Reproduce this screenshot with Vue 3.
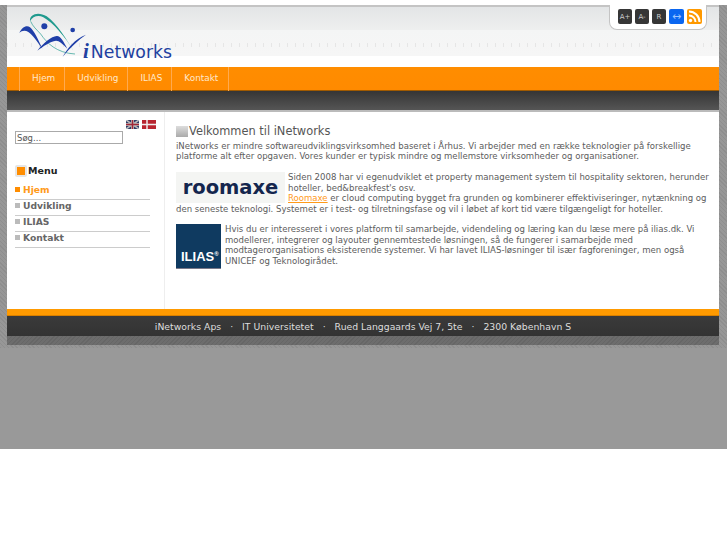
<template>
  <div class="page">
    <div class="shell">
      <header class="top">
        <div class="logo">
          <svg width="100" height="58" viewBox="0 0 300 174" class="logo-mark">
            <path d="M60 40C58 18 85 10 110 25C140 45 170 95 193 133C165 85 130 45 100 28C85 20 68 25 60 40Z" fill="#1f9a8e" />
            <path d="M62 40C68 55 80 65 92 78C110 105 140 135 195 138" fill="none" stroke="#1f9a8e" stroke-width="2" />
            <path d="M28 75C35 58 50 50 60 58C72 68 85 95 97 122C80 100 68 80 55 72C45 66 35 68 28 75Z" fill="#1f3fa8" />
            <path d="M82 128C100 105 125 85 140 84C152 83 160 100 172 122C158 108 148 98 138 98C120 100 100 115 82 128Z" fill="#1f3fa8" />
            <path d="M158 146C172 122 195 92 228 80C205 95 182 118 158 146Z" fill="#1f3fa8" />
            <circle cx="103" cy="55" r="9" fill="#1f3fa8" />
            <circle cx="188" cy="66" r="7" fill="#1f3fa8" />
          </svg>
          <span class="logo-text"><i>i</i>Networks</span>
        </div>
        <div class="tools">
          <span class="tool">A+</span>
          <span class="tool">A-</span>
          <span class="tool">R</span>
          <span class="tool blue">↔</span>
          <span class="tool rss">
            <svg width="13" height="13" viewBox="0 0 13 13">
              <circle cx="2.5" cy="10.5" r="1.7" fill="#fff" />
              <path d="M1 5.5a6.5 6.5 0 0 1 6.5 6.5M1 1.5a10.5 10.5 0 0 1 10.5 10.5" fill="none" stroke="#fff" stroke-width="2" />
            </svg>
          </span>
        </div>
      </header>

      <nav class="nav">
        <a v-for="item in navItems" :key="item" class="nav-item">{{ item }}</a>
      </nav>
      <div class="darkbar"></div>

      <div class="main">
        <aside class="side">
          <div class="flags">
            <svg width="13" height="9" viewBox="0 0 13 9" class="flag">
              <rect width="13" height="9" fill="#2b3a66" />
              <path d="M0 0L13 9M13 0L0 9" stroke="#bbb" stroke-width="1.6" />
              <path d="M6.5 0V9M0 4.5H13" stroke="#bbb" stroke-width="3" />
              <path d="M6.5 0V9M0 4.5H13" stroke="#a02838" stroke-width="1.5" />
            </svg>
            <svg width="14" height="9" viewBox="0 0 14 9" class="flag">
              <rect width="14" height="9" fill="#b8242f" />
              <path d="M5 0V9M0 4.5H14" stroke="#eee" stroke-width="1.5" />
            </svg>
          </div>
          <input class="search" type="text" value="Søg..." />
          <h3 class="menu-title"><span class="menu-icon"><span></span></span>Menu</h3>
          <ul class="menu">
            <li v-for="(item, i) in menuItems" :key="item" :class="{ active: i === 0 }">
              <span class="bullet"></span>{{ item }}
            </li>
          </ul>
        </aside>

        <section class="content">
          <h2 class="title"><span class="title-icon"></span>Velkommen til iNetworks</h2>
          <p>iNetworks er mindre softwareudviklingsvirksomhed baseret i Århus. Vi arbejder med en række teknologier på forskellige platforme alt efter opgaven. Vores kunder er typisk mindre og mellemstore virksomheder og organisationer.</p>
          <p>
            <span class="roomaxe">roomaxe</span>
            Siden 2008 har vi egenudviklet et property management system til hospitality sektoren, herunder hoteller, bed&amp;breakfest's osv.<br />
            <a class="link">Roomaxe</a> er cloud computing bygget fra grunden og kombinerer effektiviseringer, nytænkning og den seneste teknologi. Systemet er i test- og tilretningsfase og vil i løbet af kort tid være tilgængeligt for hoteller.
          </p>
          <p>
            <span class="ilias">ILIAS<sup>®</sup></span>
            Hvis du er interesseret i vores platform til samarbejde, videndeling og læring kan du læse mere på ilias.dk. Vi modellerer, integrerer og layouter gennemtestede løsningen, så de fungerer i samarbejde med modtagerorganisations eksisterende systemer. Vi har lavet ILIAS-løsninger til især fagforeninger, men også UNICEF og Teknologirådet.
          </p>
        </section>
      </div>

      <div class="orange"></div>
      <footer class="foot">
        <span>iNetworks Aps</span><span class="dot">·</span>
        <span>IT Universitetet</span><span class="dot">·</span>
        <span>Rued Langgaards Vej 7, 5te</span><span class="dot">·</span>
        <span>2300 København S</span>
      </footer>
      <div class="hatch"></div>
    </div>
  </div>
</template>

<script setup>
const navItems = ['Hjem', 'Udvikling', 'ILIAS', 'Kontakt']
const menuItems = ['Hjem', 'Udvikling', 'ILIAS', 'Kontakt']
</script>

<style>
html, body {
  background: #fff;
}
</style>

<style scoped>
.page {
  height: 444px;
  margin-top: 5px;
  padding: 0 8px 0 7px;
  background: #999;
  font-family: "DejaVu Sans", sans-serif;
  overflow: hidden;
  position: relative;
}

.page::before {
  content: "";
  position: absolute;
  left: 0;
  right: 0;
  top: 0;
  height: 343px;
  background: repeating-linear-gradient(45deg, #8e8e8e 0 1px, #979797 1px 3px);
}

.shell {
  position: relative;
}

/* header */
.top {
  height: 62px;
  border-top: 2px solid #c4c4c4;
  box-sizing: border-box;
  background:
    repeating-linear-gradient(90deg, #e6e6e6 0 1px, transparent 1px 8px) 0 36px / 100% 4px no-repeat,
    linear-gradient(#e3e5e6, #eeefef 23px, #f4f5f5 23px, #f6f6f6 49px, #fff 49px);
  position: relative;
}

.logo {
  padding: 1px 0 0 3px;
  position: relative;
}

.logo-mark {
  display: block;
}

.logo-text {
  position: absolute;
  left: 76px;
  top: 34px;
  font-size: 17.3px;
  line-height: 20px;
  color: #2140a0;
}

.logo-text i {
  font-family: "Liberation Serif", serif;
  font-weight: bold;
  font-size: 21px;
  margin-right: 2px;
}

.tools {
  position: absolute;
  top: -2px;
  right: 12px;
  width: 98px;
  height: 25px;
  box-sizing: border-box;
  display: flex;
  gap: 3px;
  padding: 4px 0 0 8px;
  background: #fff;
  border: 1px solid #c4c4c4;
  border-top: 0;
  border-radius: 0 0 8px 8px;
}

.tool {
  width: 14px;
  height: 15px;
  flex: none;
  display: flex;
  align-items: center;
  justify-content: center;
  border-radius: 2px;
  background: #363636;
  color: #ccc;
  font-size: 7px;
}

.tool.blue {
  width: 15px;
  background: #0a66f0;
  color: #9cc4ff;
  font-size: 11px;
}

.tool.rss {
  width: 15px;
  background: #ff9900;
}

/* nav */
.nav {
  height: 24px;
  display: flex;
  padding-left: 12px;
  background: linear-gradient(#ff8d00, #ff8a00);
  box-shadow: inset 0 -1px 0 #a05a00;
}

.nav-item {
  padding: 0 9px 0 12px;
  border-left: 1px solid #ffaa50;
  color: #ffe8cc;
  font-size: 8.9px;
  line-height: 23px;
}

.nav-item:last-child {
  padding-right: 10px;
  border-right: 1px solid #ffaa50;
}

.darkbar {
  height: 19px;
  background: linear-gradient(#353535, #555);
  border-bottom: 2px solid #bbb;
}

/* main */
.main {
  height: 197px;
  display: flex;
  background: #fff;
}

.side {
  width: 158px;
  flex: none;
  box-sizing: border-box;
  padding: 8px 0 0 8px;
  border-right: 1px solid #eee;
}

.flags {
  display: flex;
  justify-content: flex-end;
  gap: 3px;
  padding-right: 8px;
  height: 11px;
}

.flag {
  display: block;
}

.search {
  display: block;
  width: 108px;
  height: 13px;
  box-sizing: border-box;
  margin: 0;
  padding: 0 1px;
  border: 1px solid #aaa;
  font: 8.5px "DejaVu Sans", sans-serif;
  color: #555;
  outline: none;
}

.menu-title {
  display: flex;
  align-items: center;
  gap: 1px;
  margin: 20px 0 7px;
  font-size: 9.5px;
  font-weight: bold;
  color: #222;
  height: 13px;
}

.menu-icon {
  width: 12px;
  height: 12px;
  box-sizing: border-box;
  padding: 2px;
  background: #e6e6e6;
  border-radius: 2px;
}

.menu-icon span {
  display: block;
  width: 8px;
  height: 8px;
  background: #ff8d00;
}

.menu {
  list-style: none;
  margin: 0;
  padding: 0;
  width: 135px;
}

.menu li {
  height: 16px;
  box-sizing: border-box;
  padding-bottom: 4px;
  border-bottom: 1px solid #ccc;
  font-size: 9.2px;
  font-weight: bold;
  color: #666;
  display: flex;
  align-items: center;
  gap: 3px;
}

.menu li.active {
  color: #ff9a1a;
}

.bullet {
  width: 5px;
  height: 5px;
  background: #bbb;
}

.active .bullet {
  background: #ff8d00;
}

/* content */
.content {
  flex: 1;
  min-width: 0;
  padding: 12px 7px 0 11px;
  font-size: 8.55px;
  line-height: 10.4px;
  color: #5c5c5c;
}

.title {
  display: flex;
  align-items: center;
  gap: 1px;
  height: 14px;
  margin: 0 0 3px;
  font-size: 11.4px;
  font-weight: normal;
  color: #555;
}

.title-icon {
  width: 12px;
  height: 11px;
  background: linear-gradient(#ddd, #aaa);
}

.content p {
  margin: 0 0 10.5px;
}

.link {
  color: #ff9a1a;
  text-decoration: underline;
}

.roomaxe {
  float: left;
  width: 109px;
  height: 31px;
  margin-right: 3px;
  background: #f4f5f3;
  color: #14264e;
  font-size: 19.5px;
  font-weight: bold;
  line-height: 32px;
  text-align: center;
}

.ilias {
  float: left;
  width: 45px;
  height: 45px;
  margin-right: 4px;
  box-sizing: border-box;
  padding: 26px 0 0 5px;
  background: #0f3a60;
  border-bottom: 1px solid #778;
  color: #fff;
  font: bold 13px/14px "Liberation Sans", sans-serif;
}

.ilias sup {
  font-size: 6px;
  line-height: 0;
}

/* footer */
.orange {
  height: 7px;
  background: #ff9a00;
  box-shadow: inset 0 -1px 0 #d98000;
}

.foot {
  height: 20px;
  display: flex;
  justify-content: center;
  align-items: center;
  background: linear-gradient(#3a3a3a, #333);
  color: #ddd;
  font-size: 9.3px;
}

.dot {
  margin: 0 9px;
}

.hatch {
  height: 9px;
  background: repeating-linear-gradient(135deg, #666 0 1px, #6d6d6d 1px 3px);
}
</style>
